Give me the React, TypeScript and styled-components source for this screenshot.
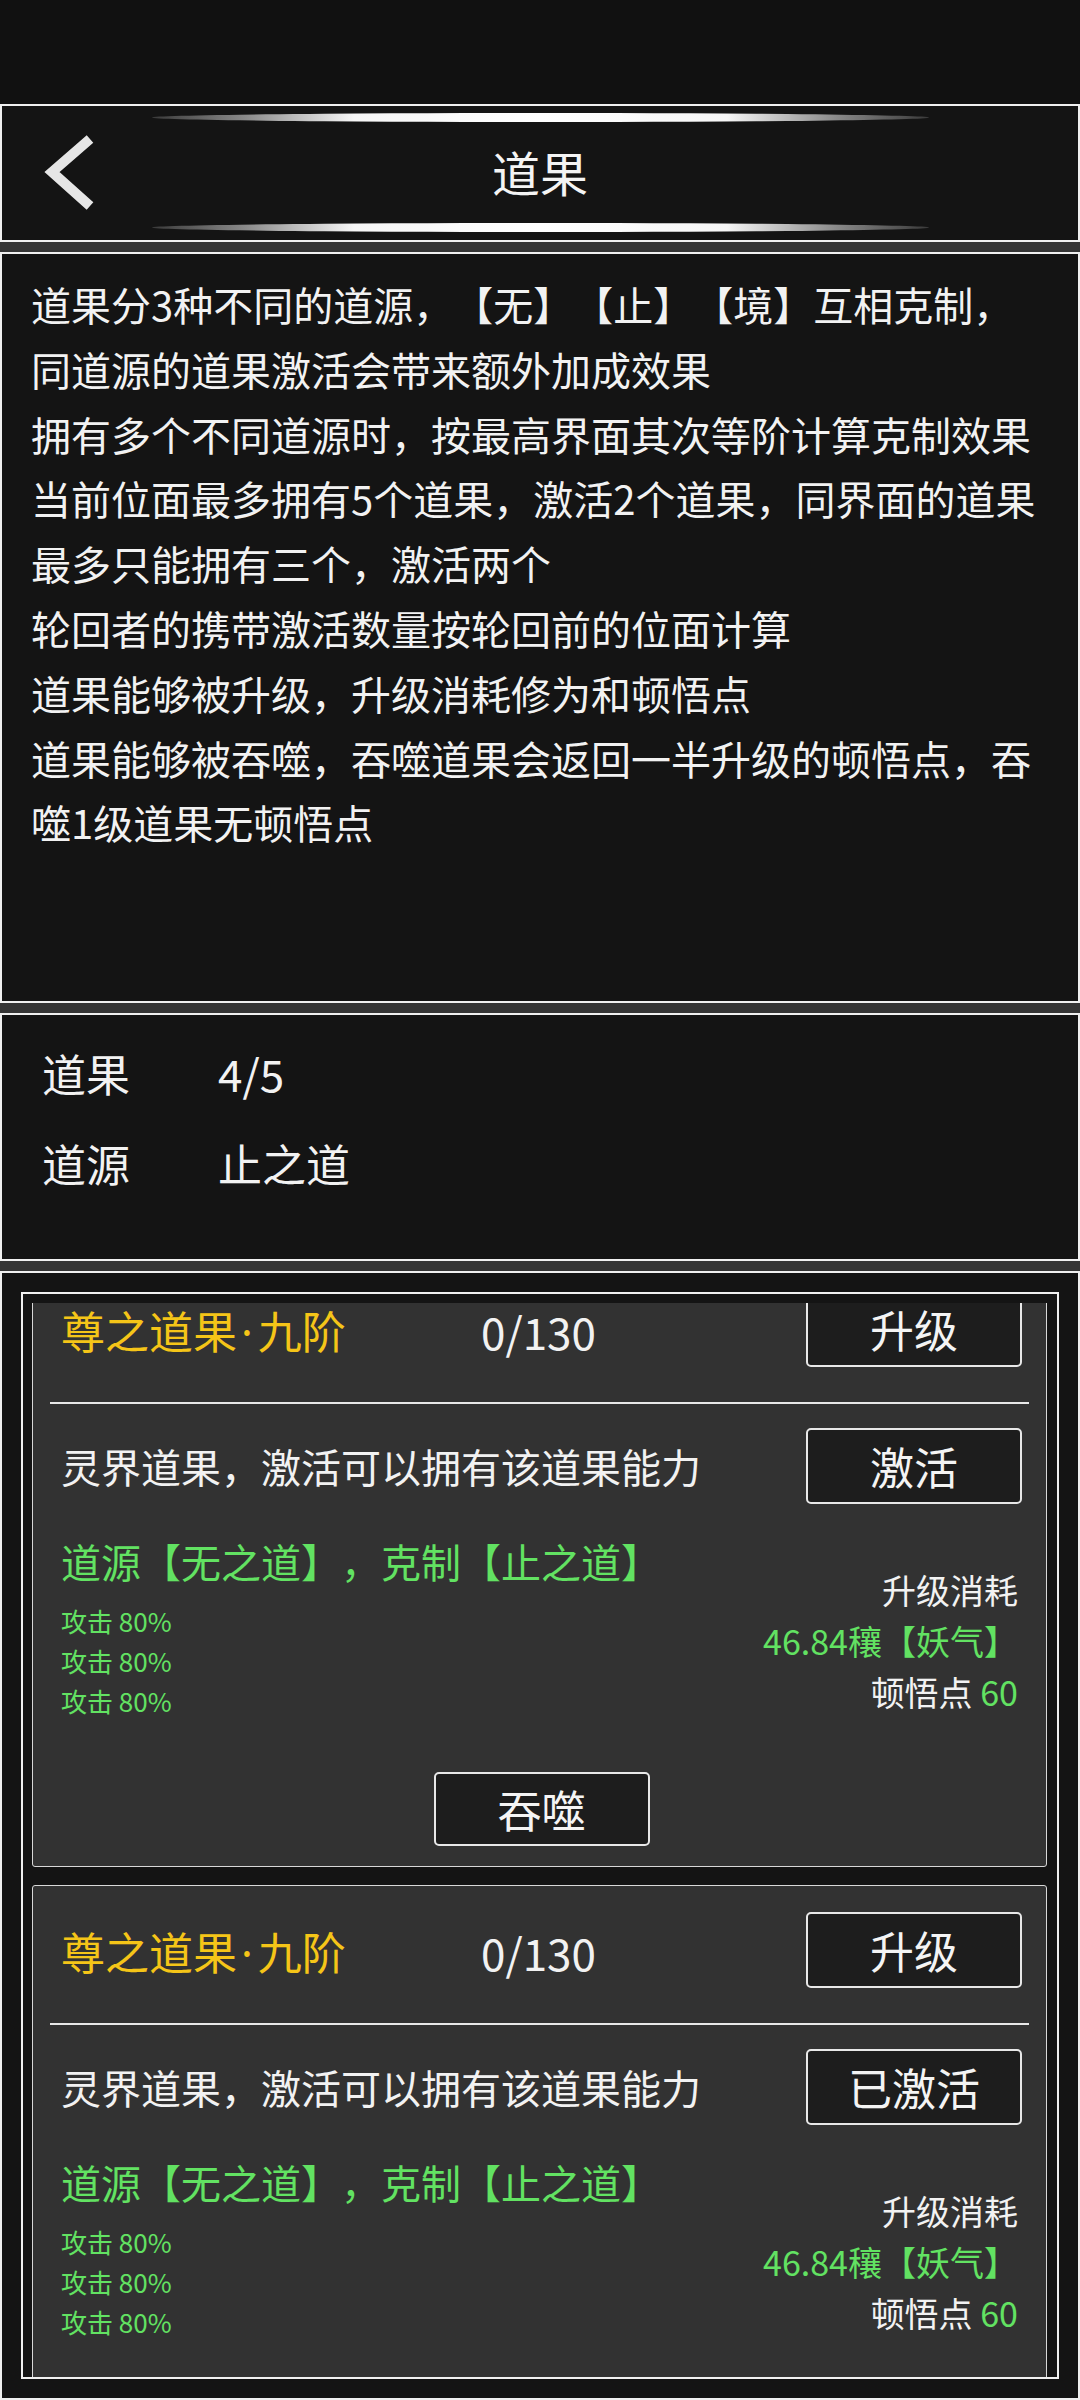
import styled, { createGlobalStyle } from "styled-components";

const GlobalStyle = createGlobalStyle`
    * {
        box-sizing: border-box;
    }
    html, body {
        margin: 0;
        padding: 0;
        background: #111111;
    }
    body {
        font-family: "Noto Sans CJK SC", "Noto Sans", sans-serif;
        color: #f2f2f2;
        text-spacing-trim: space-all;
    }
`;

const rules = [
    ["道果分3种不同的道源，【无】【止】【境】互相克制，", "同道源的道果激活会带来额外加成效果"],
    ["拥有多个不同道源时，按最高界面其次等阶计算克制效果"],
    ["当前位面最多拥有5个道果，激活2个道果，同界面的道果", "最多只能拥有三个，激活两个"],
    ["轮回者的携带激活数量按轮回前的位面计算"],
    ["道果能够被升级，升级消耗修为和顿悟点"],
    ["道果能够被吞噬，吞噬道果会返回一半升级的顿悟点，吞", "噬1级道果无顿悟点"],
];

const cards = [{ activated: false }, { activated: true }];

function BackIcon() {
    return (
        <svg width="56" height="80" viewBox="0 0 56 80">
            <polyline
                points="48,5 10,38 48,72"
                fill="none"
                stroke="#e6e6e6"
                strokeWidth="10"
                strokeLinejoin="miter"
                strokeLinecap="butt"
            />
        </svg>
    );
}

function DaoCard({ activated }: { activated: boolean }) {
    return (
        <Card>
            <TopRow>
                <CardTitle>
                    尊之道果<Dot>·</Dot>九阶
                </CardTitle>
                <Count>0/130</Count>
                <ActionButton>升级</ActionButton>
            </TopRow>
            <Divider />
            <InfoRow>
                <Intro>灵界道果，激活可以拥有该道果能力</Intro>
                <ActionButton>{activated ? "已激活" : "激活"}</ActionButton>
            </InfoRow>
            <Detail>
                <div>
                    <Source>道源【无之道】，克制【止之道】</Source>
                    <Stats>
                        <div>攻击 80%</div>
                        <div>攻击 80%</div>
                        <div>攻击 80%</div>
                    </Stats>
                </div>
                <Cost>
                    <div>升级消耗</div>
                    <Green>46.84穰【妖气】</Green>
                    <div>
                        顿悟点 <Green>60</Green>
                    </div>
                </Cost>
            </Detail>
            <SwallowRow>
                <ActionButton>吞噬</ActionButton>
            </SwallowRow>
        </Card>
    );
}

export default function App() {
    return (
        <Page>
            <GlobalStyle />
            <StatusBar />
            <Header>
                <Sheen />
                <TitleRow>
                    <Back>
                        <BackIcon />
                    </Back>
                    <PageTitle>道果</PageTitle>
                    <span />
                </TitleRow>
                <Sheen />
            </Header>
            <Gap />
            <RulesPanel>
                {rules.map((lines, i) => (
                    <p key={i}>
                        {lines.map((line, j) => (
                            <span key={j}>
                                {j > 0 && <br />}
                                {line}
                            </span>
                        ))}
                    </p>
                ))}
            </RulesPanel>
            <Gap />
            <StatsPanel>
                <span>道果</span>
                <span>4/5</span>
                <span>道源</span>
                <span>止之道</span>
            </StatsPanel>
            <Gap />
            <ListPanel>
                <Frame>
                    <Viewport>
                        <List>
                            {cards.map((c, i) => (
                                <DaoCard key={i} activated={c.activated} />
                            ))}
                        </List>
                    </Viewport>
                </Frame>
            </ListPanel>
        </Page>
    );
}

// style
const Page = styled.div`
    width: 1080px;
    height: 2400px;
    display: flex;
    flex-direction: column;
    background: #111111;
    overflow: hidden;
`;

const StatusBar = styled.div`
    height: 104px;
    flex: none;
    background: #111111;
`;

const Gap = styled.div`
    height: 10px;
    flex: none;
    background: #353535;
`;

const Panel = styled.div`
    flex: none;
    background: #141414;
    border: 2px solid #f0f0f0;
`;

const Header = styled(Panel)`
    height: 138px;
    display: flex;
    flex-direction: column;
    align-items: center;
    padding: 7px 0 8px;
`;

const Sheen = styled.div`
    width: 777px;
    height: 9px;
    flex: none;
    border-radius: 50%;
    background: linear-gradient(
        90deg,
        #3a3a3a 0%,
        #8a8a8a 12%,
        #f6f6f6 26%,
        #ffffff 50%,
        #f6f6f6 74%,
        #8a8a8a 88%,
        #3a3a3a 100%
    );
`;

const TitleRow = styled.div`
    flex: 1;
    width: 100%;
    display: grid;
    grid-template-columns: 1fr auto 1fr;
    align-items: center;
`;

const Back = styled.div`
    display: flex;
    align-items: center;
    padding-left: 40px;
    margin-top: 2px;
`;

const PageTitle = styled.div`
    font-size: 48px;
    line-height: 60px;
    color: #f4f4f4;
    margin-top: -4px;
`;

const RulesPanel = styled(Panel)`
    height: 751px;
    padding: 18px 0 0 29px;
    font-size: 40px;
    line-height: 64.8px;
    white-space: nowrap;

    p {
        margin: 0;
    }
`;

const StatsPanel = styled(Panel)`
    height: 248px;
    display: grid;
    grid-template-columns: 176px auto;
    grid-auto-rows: 90px;
    align-items: center;
    padding: 13px 0 0 40px;
    font-size: 44px;
`;

const ListPanel = styled(Panel)`
    flex: 1;
    display: flex;
    flex-direction: column;
    padding: 19px 19px;
    min-height: 0;
`;

const Frame = styled.div`
    flex: 1;
    display: flex;
    flex-direction: column;
    border: 2px solid #f0f0f0;
    padding: 9px 10px 0 9px;
    min-height: 0;
`;

const Viewport = styled.div`
    flex: 1;
    overflow: hidden;
`;

const List = styled.div`
    display: flex;
    flex-direction: column;
    gap: 18px;
    margin-top: -39px;
`;

const Card = styled.div`
    background: #323232;
    border: 1px solid #d8d8d8;
    border-radius: 3px;
    padding: 0 24px 20px 28px;
`;

const TopRow = styled.div`
    display: grid;
    grid-template-columns: 420px 1fr 216px;
    align-items: center;
    height: 76px;
    margin-top: 26px;
`;

const CardTitle = styled.div`
    font-size: 44px;
    line-height: 56px;
    color: #f5c518;
    margin-top: 3px;
    white-space: nowrap;
`;

const Dot = styled.span`
    font-family: "Noto Sans", "Liberation Sans", sans-serif;
    padding: 0 5px 0 4px;
`;

const Count = styled.div`
    font-size: 44px;
    line-height: 56px;
    color: #f2f2f2;
    margin-top: 3px;
`;

const ActionButton = styled.div`
    width: 216px;
    height: 76px;
    flex: none;
    display: flex;
    align-items: center;
    justify-content: center;
    background: #1d1d1d;
    border: 2px solid #e8e8e8;
    border-radius: 5px;
    font-size: 44px;
    color: #f4f4f4;
`;

const Divider = styled.div`
    height: 2px;
    background: #e8e8e8;
    margin: 35px -7px 0 -11px;
`;

const InfoRow = styled.div`
    display: flex;
    align-items: center;
    justify-content: space-between;
    margin-top: 24px;
`;

const Intro = styled.div`
    font-size: 40px;
    line-height: 52px;
`;

const Detail = styled.div`
    display: flex;
    justify-content: space-between;
    align-items: flex-start;
    margin-top: 31px;
`;

const Source = styled.div`
    font-size: 40px;
    line-height: 52px;
    color: #62e262;
`;

const Stats = styled.div`
    margin-top: 14px;
    font-size: 26px;
    line-height: 40px;
    color: #62e262;
`;

const Cost = styled.div`
    padding: 29px 4px 0 0;
    text-align: right;
    font-size: 34px;
    line-height: 51px;
    color: #f2f2f2;
`;

const Green = styled.span`
    color: #62e262;
`;

const SwallowRow = styled.div`
    display: flex;
    justify-content: center;
    margin-top: 51px;

    & > div {
        height: 74px;
    }
`;
